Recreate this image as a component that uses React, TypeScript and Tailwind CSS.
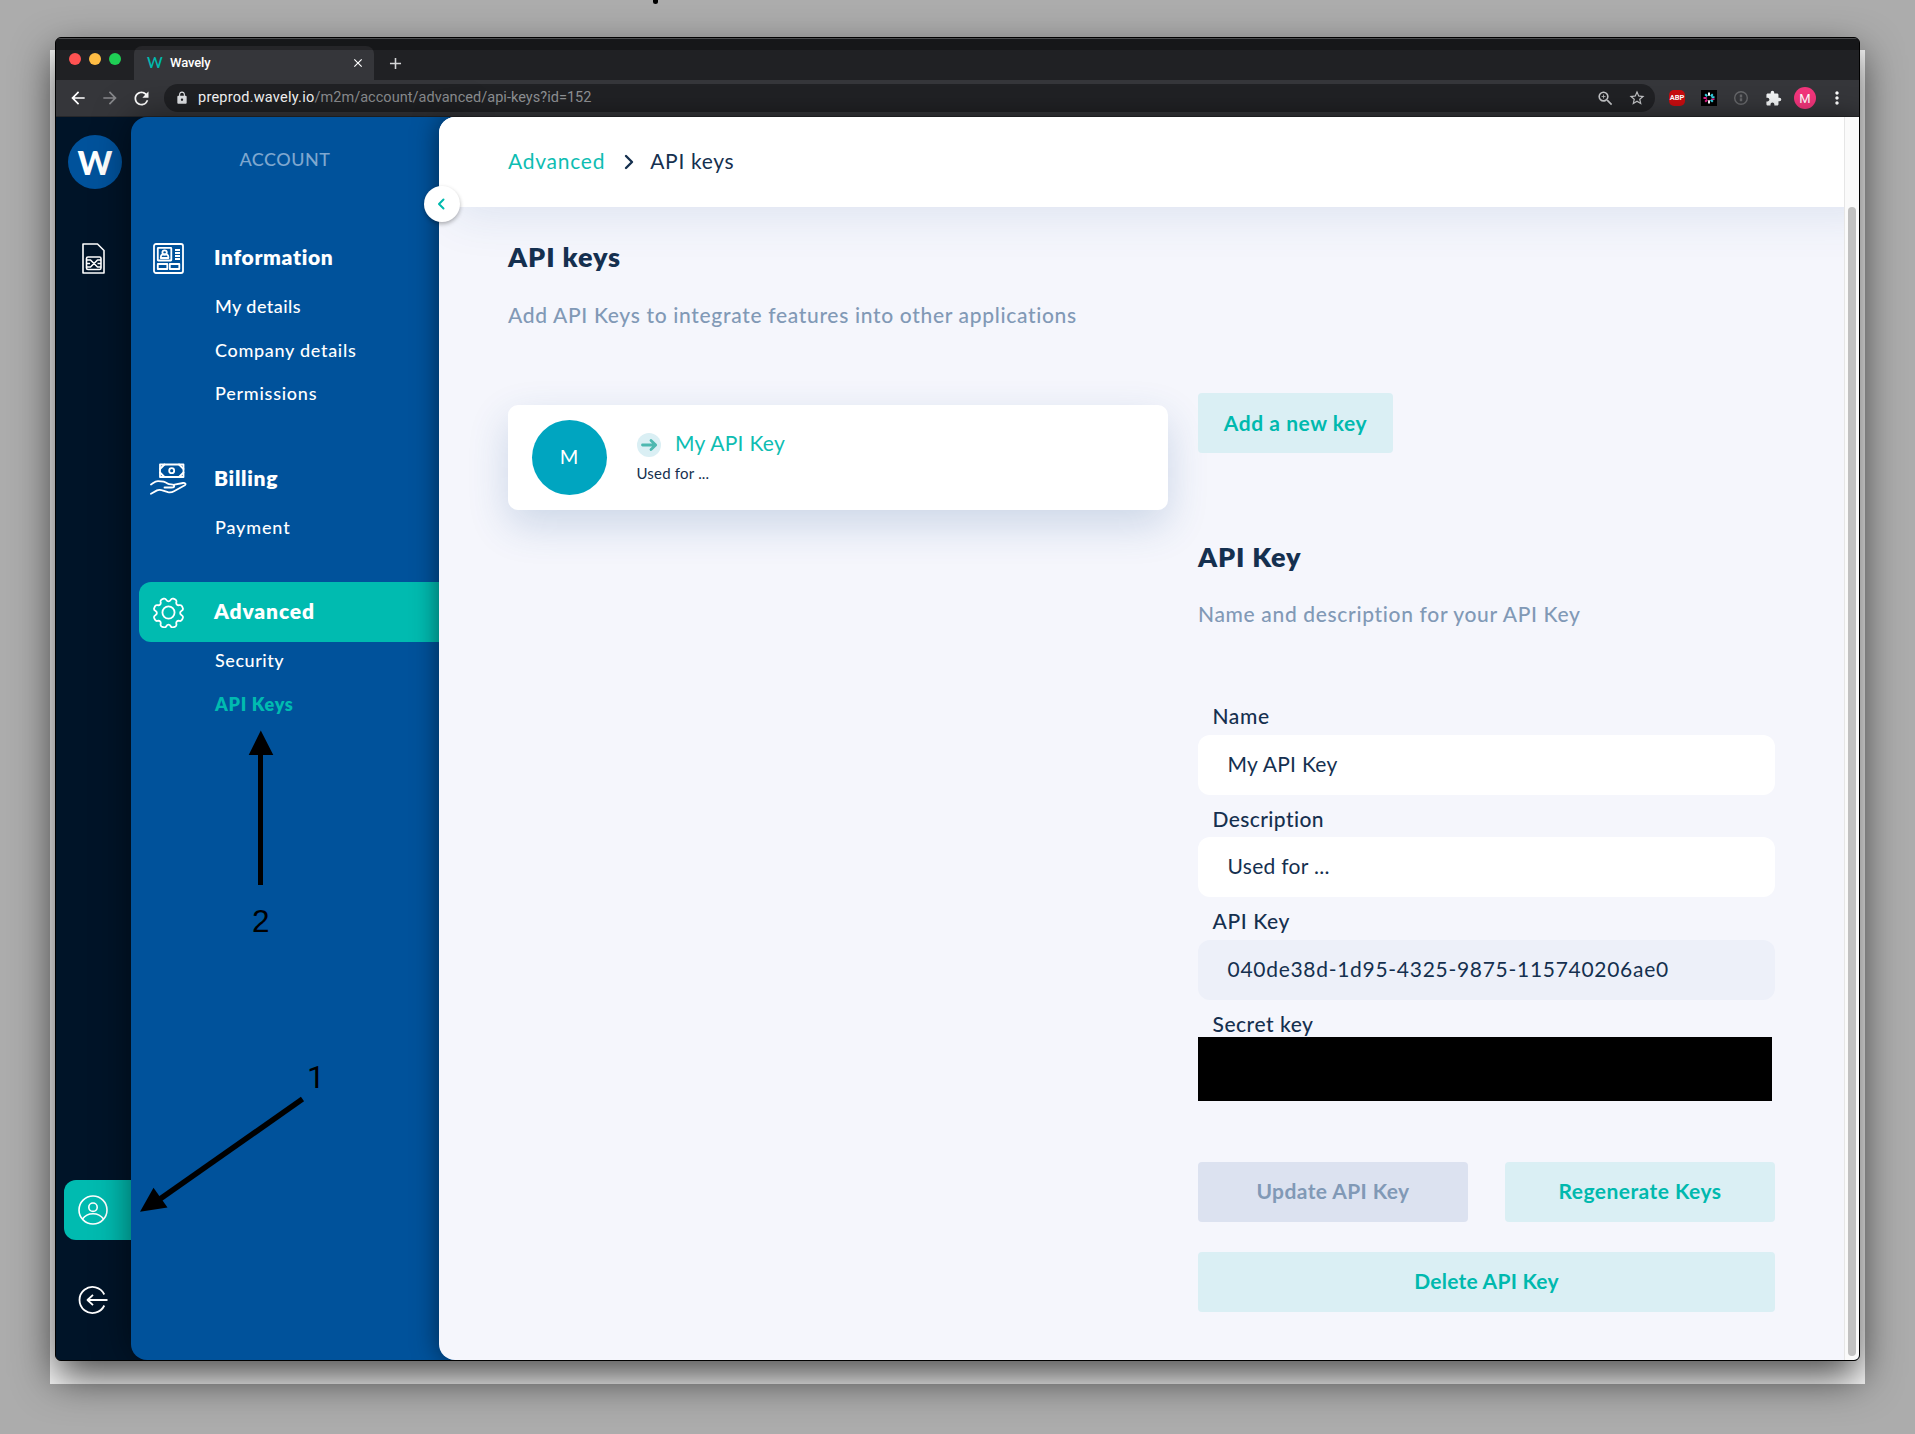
import type { ReactNode } from "react";
import {
  MdAdd,
  MdArrowBack,
  MdArrowForward,
  MdClose,
  MdExtension,
  MdLock,
  MdMoreVert,
  MdRefresh,
  MdStarBorder,
  MdZoomIn,
} from "react-icons/md";

function SimIcon() {
  return (
    <svg width="23" height="31" viewBox="0 0 23 31" fill="none" stroke="#fff" strokeWidth="1.6" strokeLinejoin="round">
      <path d="M1 1h14.5l6.5 6.5V30H1z" />
      <rect x="4.500" y="14" width="14.500" height="12.500" rx="1.500" />
      <path d="M4.500 17h4l7 7h3.500M4.500 24h4l7-7h3.500M4.500 20.500h3.500M15.500 20.500h3.500" />
    </svg>
  );
}

function IdCardIcon() {
  return (
    <svg width="31" height="31" viewBox="0 0 31 31" fill="none" stroke="#fff" strokeWidth="1.8" strokeLinejoin="round">
      <rect x="1" y="1" width="29" height="29" rx="2" />
      <rect x="4.800" y="4.800" width="13.500" height="12.700" rx="0.5" />
      <circle cx="11.600" cy="9.600" r="2.200" />
      <path d="M7.800 15v-.8c0-2 1.700-3 3.800-3s3.800 1 3.800 3v.8z" />
      <path d="M22 7h5M22 10h5M22 13h5M22 16h5" />
      <rect x="4.800" y="21" width="9.500" height="5" />
      <rect x="16.800" y="21" width="9.500" height="5" />
    </svg>
  );
}

function BillingIcon() {
  return (
    <svg width="37" height="32" viewBox="0 0 37 32" fill="none" stroke="#fff" strokeWidth="1.8" strokeLinejoin="round" strokeLinecap="round">
      <rect x="10" y="1.500" width="23.500" height="12.500" />
      <circle cx="21.700" cy="7.700" r="2.500" />
      <path d="M10 6l4.500-4.500M33.500 6L29 1.500M10 9.500l4.500 4.500M33.500 9.500L29 14" />
      <path d="M1 21.500c2.500-1.500 4-3.300 7-3.300 4.500 0 6.500 0 9.500 2.300 1 .8 2.300.9 3.700.9 2 0 3 .6 3 1.500s-1 1.600-2.500 1.600H14.500" />
      <path d="M24.500 21.700l8.500-1.700c2-.4 3.500 1.200 1.800 2.300L24 28.200c-2 1.200-4 1.500-6 1l-6.500-2c-1.500-.5-3-.6-4.500.2L1 30.700" />
    </svg>
  );
}

function GearIcon() {
  return (
    <svg width="31" height="31" viewBox="0 0 24 24" fill="none" stroke="#fff" strokeWidth="1.4" strokeLinejoin="round">
      <circle cx="12" cy="12" r="4.700" />
      <path d="M12 3.400c.9 0 1.300-.5 1.700-1.200.5-.9 1.100-1.200 2-.9l1.500.6c.9.400 1.100 1 .9 2-.2.800-.2 1.400.4 2s1.200.6 2 .4c1-.2 1.600 0 2 .9l.6 1.500c.3.900 0 1.500-.9 2-.7.400-1.200.8-1.200 1.700s.5 1.300 1.200 1.700c.9.500 1.200 1.100.9 2l-.6 1.500c-.4.900-1 1.100-2 .9-.8-.2-1.400-.2-2 .4s-.6 1.200-.4 2c.2 1 0 1.600-.9 2l-1.500.6c-.9.300-1.500 0-2-.9-.4-.7-.8-1.200-1.700-1.200s-1.300.5-1.700 1.200c-.5.900-1.100 1.200-2 .9l-1.500-.6c-.9-.4-1.100-1-.9-2 .2-.8.2-1.400-.4-2s-1.200-.6-2-.4c-1 .2-1.600 0-2-.9l-.6-1.500c-.3-.9 0-1.500.9-2 .7-.4 1.200-.8 1.200-1.700s-.5-1.300-1.200-1.700c-.9-.5-1.200-1.100-.9-2l.6-1.500c.4-.9 1-1.100 2-.9.8.2 1.400.2 2-.4s.6-1.200.4-2c-.2-1 0-1.600.9-2l1.500-.6c.9-.3 1.500 0 2 .9.400.7.8 1.200 1.700 1.200z" />
    </svg>
  );
}

function UserIcon() {
  return (
    <svg width="30" height="30" viewBox="0 0 30 30" fill="none" stroke="#fff" strokeWidth="1.600">
      <circle cx="15" cy="15" r="14" />
      <circle cx="15" cy="12.200" r="4.200" />
      <path d="M4.500 24c2.500-3.600 6-5.300 10.500-5.300s8 1.700 10.500 5.300" />
    </svg>
  );
}

function LogoutIcon() {
  return (
    <svg width="30" height="28" viewBox="0 0 30 28" fill="none" stroke="#fff" strokeWidth="1.800" strokeLinejoin="round">
      <path d="M26.300 8.500A13 13 0 1 0 26.300 19.500" />
      <path d="M29.500 14H10M15 8.800L9.500 14l5.500 5.200" />
    </svg>
  );
}

function PinwheelIcon() {
  return (
    <svg width="16" height="16" viewBox="0 0 16 16" fill="none" strokeWidth="2">
      <rect width="16" height="16" fill="#000" />
      <path d="M8 2.500v3.300M8 10.200v3.300" stroke="#fff" />
      <path d="M4.200 4.200l2 2M11.800 4.200l-2 2M10.500 7.200h3" stroke="#36d3e6" />
      <path d="M2.500 8h3.200M4.200 11.800l2-2" stroke="#e0218a" />
      <path d="M11.800 11.800l-2-2" stroke="#36d3e6" />
      <path d="M10.500 9.200h3" stroke="#e0218a" strokeWidth="1.500" />
    </svg>
  );
}

function BrowserChrome() {
  return (
    <div className="shrink-0 font-['Roboto',sans-serif]">
      <div className="relative flex h-[42px] items-end bg-[#202124]">
        <div className="flex h-[42px] w-[78px] items-center gap-2 pl-[13px]">
          <span className="size-3 rounded-full bg-[#ff5252]" />
          <span className="size-3 rounded-full bg-[#ffbd44]" />
          <span className="size-3 rounded-full bg-[#1fcf55]" />
        </div>
        <div className="flex h-[34px] w-[240px] items-center rounded-t-lg bg-[#35363a] pr-[9px] pb-0.5 pl-[13px] text-white">
          <span className="w-[23px] font-['Lato',sans-serif] text-[15px] leading-none font-semibold text-[#00b9ae]">W</span>
          <span className="text-[13px] leading-none font-medium tracking-[-0.1px]">Wavely</span>
          <MdClose className="mt-0.5 ml-auto size-[14px]" />
        </div>
        <div className="flex h-[34px] w-[43px] items-center justify-center">
          <MdAdd className="size-[19px] text-[#d5d6d8]" />
        </div>
        <div className="absolute inset-x-0 top-0 h-3 border-t border-[#4b4c4e] bg-black/30" />
      </div>
      <div className="flex h-[36px] items-center bg-[#35363a] text-white">
        <MdArrowBack className="ml-[12px] size-[20px]" />
        <MdArrowForward className="ml-[12px] size-[20px] text-[#86878a]" />
        <MdRefresh className="ml-[11px] size-[21px]" />
        <div className="ml-[12px] flex h-7 w-[1491px] items-center rounded-full bg-[#202124] pr-[9px] pl-[11px]">
          <MdLock className="size-[14px] text-[#e8eaed]" />
          <span className="ml-[9px] pt-px text-[14.5px] leading-none tracking-[0.24px]">
            preprod.wavely.io
            <span className="tracking-[0.04px] text-[#8f9194]">/m2m/account/advanced/api-keys?id=152</span>
          </span>
          <MdZoomIn className="ml-auto size-[19px] text-[#c3c4c6]" />
          <MdStarBorder className="ml-[13px] size-[18px] text-[#c3c4c6]" />
        </div>
        <span className="ml-[14px] flex size-4 items-center justify-center rounded-[5px] bg-[#c70d10] text-[7.5px] leading-none font-bold">
          ABP
        </span>
        <span className="ml-4">
          <PinwheelIcon />
        </span>
        <svg className="ml-[17px]" width="14" height="14" viewBox="0 0 14 14" fill="none" stroke="#66676a">
          <circle cx="7" cy="7" r="6.300" strokeWidth="1.400" />
          <path d="M7 3.500v7" strokeWidth="2.400" strokeDasharray="3 .8" />
        </svg>
        <MdExtension className="ml-[17px] size-[17px] text-[#f1f3f4]" />
        <span className="ml-[12px] flex size-[22px] items-center justify-center rounded-full bg-[#f2357b] text-[13px] leading-none">
          M
        </span>
        <MdMoreVert className="ml-[11px] size-[20px]" />
      </div>
      <div className="h-px bg-[#26272a]" />
    </div>
  );
}

function IconRail() {
  return (
    <nav className="flex w-[75px] shrink-0 flex-col items-center bg-[#001428]">
      <div className="mt-[18px] mr-[-3px] flex size-[54px] items-center justify-center rounded-full bg-[#00529b] text-[33px] leading-none font-black text-white">
        W
      </div>
      <div className="mt-[54px]">
        <SimIcon />
      </div>
      <div className="mt-auto flex h-[60px] w-[67px] items-center self-end rounded-l-xl bg-[#00bbb0] pl-[14px]">
        <UserIcon />
      </div>
      <div className="mt-[46px] mr-px mb-[46px]">
        <LogoutIcon />
      </div>
    </nav>
  );
}

function Section({
  icon,
  title,
  titleClass,
  items,
  active,
}: {
  icon: ReactNode;
  title: string;
  titleClass: string;
  items: { label: string; className: string }[];
  active?: boolean;
}) {
  return (
    <section>
      <div className={active ? "flex h-[60px] items-center rounded-l-xl bg-[#00bbb0]" : "flex h-[60px] items-center"}>
        <span className="flex w-[60px] justify-center pr-px">{icon}</span>
        <h2 className={`ml-[15px] pb-0.5 text-[21px] leading-[30px] font-extrabold ${titleClass}`}>{title}</h2>
      </div>
      <ul className="-mt-[3px] pl-[76px]">
        {items.map((item) => (
          <li key={item.label} className={`text-[18px] leading-[43.5px] ${item.className}`}>
            {item.label}
          </li>
        ))}
      </ul>
    </section>
  );
}

function AccountMenu() {
  return (
    <aside className="flex w-[324px] shrink-0 flex-col rounded-l-2xl bg-[#00529b] text-white shadow-[0_0_36px_rgba(0,0,0,0.5)]">
      <div className="mr-4 pt-[27px] text-center text-[18px] leading-[30px] font-medium tracking-[0.5px] text-[#7ea7cf]">
        ACCOUNT
      </div>
      <div className="mt-[54px] flex flex-col gap-[33px] pl-2">
        <Section
          icon={<IdCardIcon />}
          title="Information"
          titleClass="tracking-[0.65px]"
          items={[
            { label: "My details", className: "font-medium tracking-[0.45px]" },
            { label: "Company details", className: "font-medium tracking-[0.7px]" },
            { label: "Permissions", className: "font-medium tracking-[0.75px]" },
          ]}
        />
        <Section
          icon={<BillingIcon />}
          title="Billing"
          titleClass="tracking-[0.7px]"
          items={[{ label: "Payment", className: "font-medium tracking-[0.85px]" }]}
        />
        <Section
          active
          icon={<GearIcon />}
          title="Advanced"
          titleClass="tracking-[0.85px]"
          items={[
            { label: "Security", className: "font-medium tracking-[0.55px]" },
            { label: "API Keys", className: "font-extrabold tracking-[0.7px] text-[#00bbb0]" },
          ]}
        />
      </div>
    </aside>
  );
}

function KeyCard() {
  return (
    <div className="mt-3 flex h-[105px] w-[660px] items-center rounded-[10px] bg-white pl-6 shadow-[0_15px_40px_rgba(40,90,150,0.2)]">
      <div className="flex size-[75px] items-center justify-center rounded-full bg-[#00a5c0] pr-px pb-[3px] text-[20px] text-white">M</div>
      <div className="ml-[29.5px] pb-1">
        <div className="flex h-[30px] items-center">
          <svg className="mt-[3px]" width="24" height="24" viewBox="0 0 24 24" fill="none">
            <circle cx="12" cy="12" r="12" fill="#daeff4" />
            <path d="M5.500 12h13M14 7.500l4.700 4.500L14 16.500" stroke="#4db8b0" strokeWidth="2.800" strokeLinecap="round" strokeLinejoin="round" />
          </svg>
          <span className="ml-[14.5px] pb-px text-[21px] leading-[30px] tracking-[0.3px] text-[#0dbdb2]">My API Key</span>
        </div>
        <div className="mt-1 text-[15px] leading-5 tracking-[0.2px]">Used for ...</div>
      </div>
    </div>
  );
}

function Field({
  label,
  labelClass,
  value,
  boxClass,
}: {
  label: string;
  labelClass: string;
  value: string;
  boxClass: string;
}) {
  return (
    <div>
      <div className={`h-[42.5px] pt-[9px] pl-[14.5px] text-[21px] leading-[30px] font-medium ${labelClass}`}>{label}</div>
      <div className={`flex h-[60px] items-center rounded-xl pb-0.5 pl-[29.5px] text-[21px] leading-[30px] ${boxClass}`}>{value}</div>
    </div>
  );
}

function KeyForm() {
  return (
    <div className="w-[577px]">
      <button className="flex h-[60px] w-[195px] items-center justify-center rounded bg-[#daeff4] pb-px text-[21px] font-bold tracking-[0.55px] text-[#00b9ae]">
        Add a new key
      </button>
      <h2 className="mt-[84px] text-[27px] leading-10 font-extrabold tracking-[0.8px]">API Key</h2>
      <p className="mt-[22px] text-[21px] leading-[30px] font-medium tracking-[0.66px] text-[#8199b6]">
        Name and description for your API Key
      </p>
      <div className="mt-[63px]">
        <Field label="Name" labelClass="tracking-[0.6px]" value="My API Key" boxClass="bg-white tracking-[0.3px]" />
        <Field label="Description" labelClass="tracking-[0.4px]" value="Used for ..." boxClass="bg-white tracking-[0.3px]" />
        <Field
          label="API Key"
          labelClass="tracking-[0.6px]"
          value="040de38d-1d95-4325-9875-115740206ae0"
          boxClass="bg-[#edf0f9] tracking-[0.71px]"
        />
        <div className="h-[37px] pt-[9px] pl-[14.5px] text-[21px] leading-[30px] font-medium tracking-[0.52px]">Secret key</div>
        <div className="relative h-16 w-[574px] bg-black" />
      </div>
      <div className="mt-[61px] grid grid-cols-2 gap-x-[37px] gap-y-[30px] text-[21px] font-bold text-[#00b9ae]">
        <button className="h-[60px] rounded bg-[#dce2f0] pb-px tracking-[0.4px] text-[#8199b6]">Update API Key</button>
        <button className="h-[60px] rounded bg-[#daeff4] pb-px tracking-[0.45px]">Regenerate Keys</button>
        <button className="col-span-2 h-[60px] rounded bg-[#daeff4] pb-px tracking-[0.25px]">Delete API Key</button>
      </div>
    </div>
  );
}

function Main() {
  return (
    <div className="relative -ml-4 flex w-[1421px] shrink-0 rounded-l-2xl shadow-[0_0_26px_rgba(0,0,0,0.5)]">
      <main className="flex w-[1405px] flex-col overflow-hidden rounded-l-2xl bg-[#f5f6fc] text-[#15304f]">
        <header className="flex h-[90px] w-[1460px] shrink-0 items-center bg-white pb-0.5 pl-[69px] text-[21px] leading-[30px] shadow-[0_20px_50px_-14px_rgba(30,80,150,0.12)]">
          <span className="tracking-[0.75px] text-[#0dbdb2]">Advanced</span>
          <svg className="mt-px ml-[18px]" width="12" height="16" viewBox="0 0 12 16" fill="none" stroke="#15304f" strokeWidth="2.400" strokeLinecap="round" strokeLinejoin="round">
            <path d="M3 2l6 6-6 6" />
          </svg>
          <span className="ml-[15px] tracking-[0.68px]">API keys</span>
        </header>
        <div className="pt-[30px] pl-[69px]">
          <h1 className="text-[27px] leading-10 font-extrabold tracking-[0.9px]">API keys</h1>
          <p className="mt-[22.5px] text-[21px] leading-[30px] font-medium tracking-[0.67px] text-[#8199b6]">
            Add API Keys to integrate features into other applications
          </p>
          <div className="mt-[63.5px] flex items-start gap-[30px]">
            <KeyCard />
            <KeyForm />
          </div>
        </div>
      </main>
      <div className="w-4 border-l border-[#e6e6e6] bg-[#fafafa] pt-[90px]">
        <div className="ml-[3px] h-[1149px] w-2 rounded-full bg-[#c1c1c1]" />
      </div>
      <button className="absolute top-[69px] -left-[15px] flex size-9 items-center justify-center rounded-full bg-white shadow-[0_2px_4px_rgba(0,0,0,0.3)]">
        <svg className="mr-[3px]" width="8" height="12" viewBox="0 0 8 12" fill="none" stroke="#00b9ae" strokeWidth="2" strokeLinecap="round" strokeLinejoin="round">
          <path d="M6.500 1.500L2 6l4.500 4.500" />
        </svg>
      </button>
    </div>
  );
}

function Annotations() {
  return (
    <svg className="pointer-events-none absolute inset-0" width="1915" height="1434" viewBox="0 0 1915 1434" fontSize="31.500">
      <path d="M653 0h5v1.500a2.500 2.500 0 0 1-5 0z" />
      <path d="M260.800 730.500L273.300 755H263v130h-5V755h-9.300z" />
      <text x="252" y="932" fontFamily="Liberation Sans, Arial, sans-serif">2</text>
      <path d="M302.500 1099L160 1199" stroke="#000" strokeWidth="5.500" />
      <path d="M140 1211.800l13.500-24 14 19.700z" />
      <text x="307" y="1088" fontFamily="Roboto, sans-serif">1</text>
    </svg>
  );
}

export default function App() {
  return (
    <div className="relative flex h-[1434px] w-[1915px] overflow-hidden bg-[#acacac] pt-[50px] pl-[50px] font-['Lato',sans-serif]">
      <div className="h-[1334px] w-[1815px] bg-white">
        <div className="-mt-[13px] ml-[5px] flex h-[1324px] w-[1805px] flex-col overflow-hidden rounded-md border border-black bg-[#202124] shadow-[0_17px_40px_rgba(0,0,0,0.7)]">
          <BrowserChrome />
          <div className="flex min-h-0 flex-1 bg-[#001428]">
            <IconRail />
            <AccountMenu />
            <Main />
          </div>
        </div>
      </div>
      <Annotations />
    </div>
  );
}
